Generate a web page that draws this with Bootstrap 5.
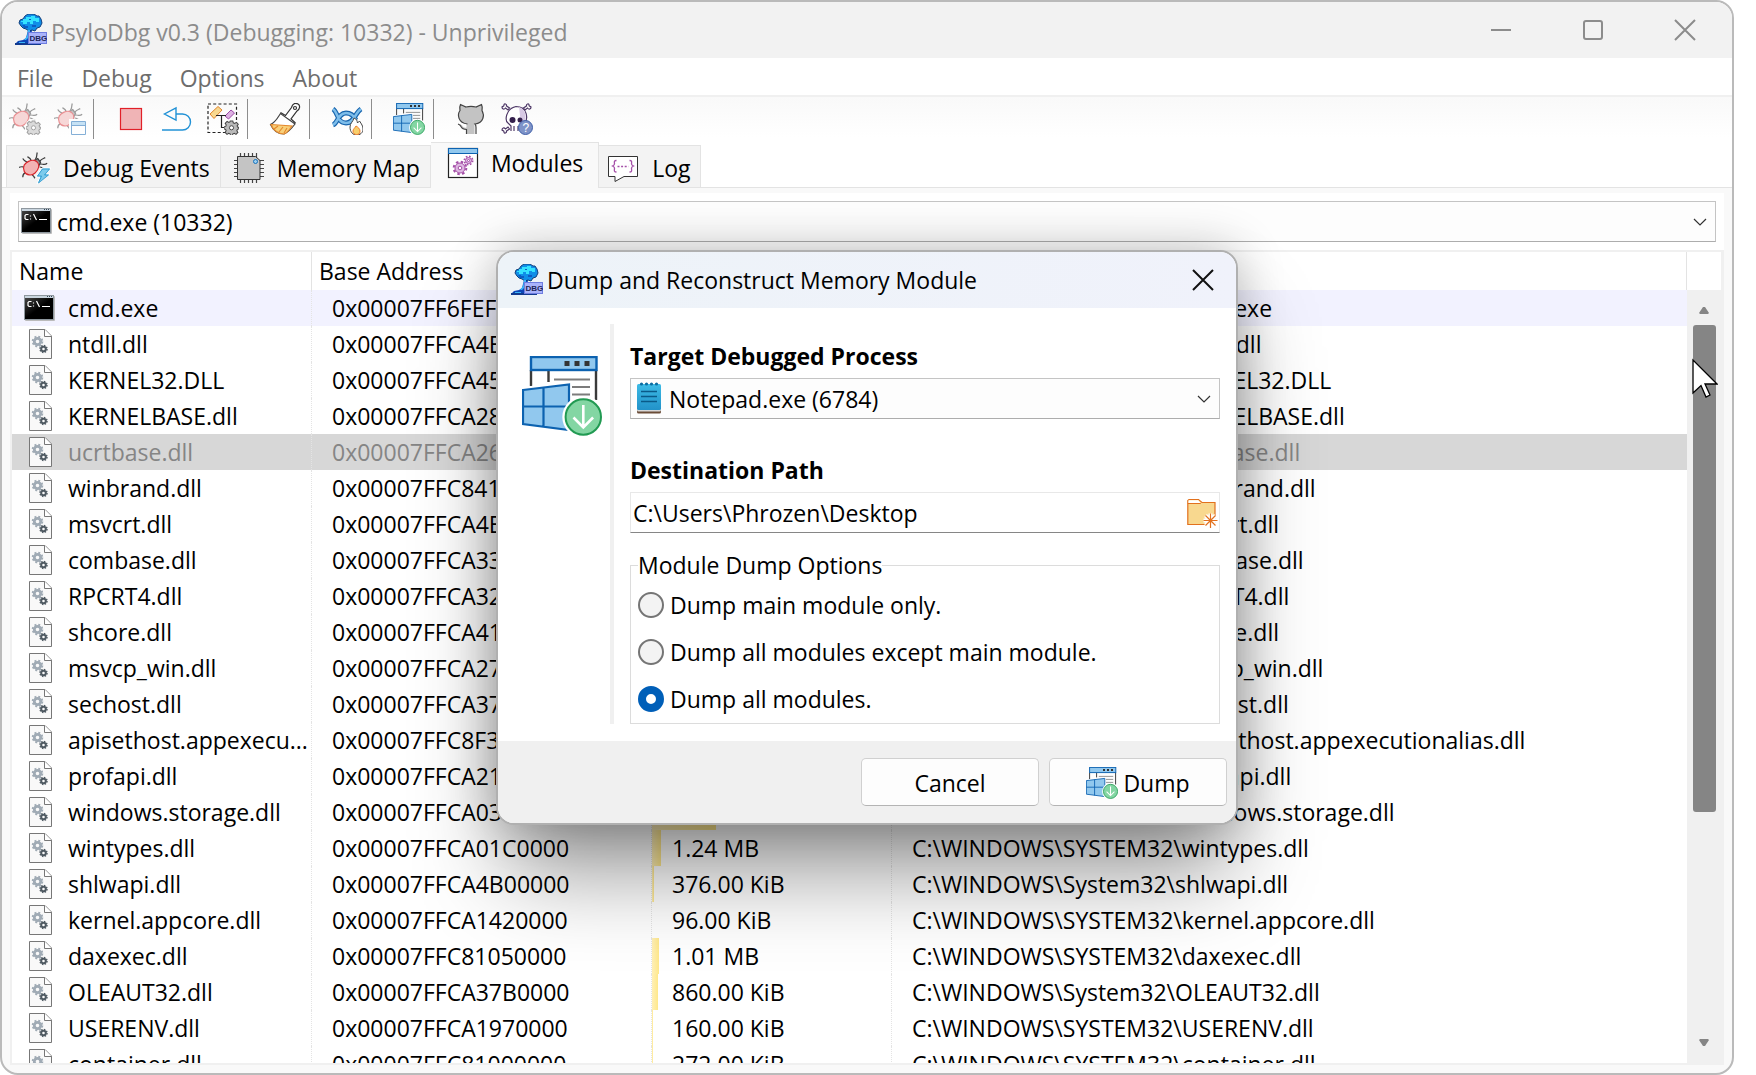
<!DOCTYPE html>
<html lang="en">
<head>
<meta charset="utf-8">
<meta name="viewport" content="width=device-width, initial-scale=1">
<title>PsyloDbg v0.3</title>
<link href="https://cdn.jsdelivr.net/npm/bootstrap@5.3.0/dist/css/bootstrap.min.css" rel="stylesheet">
<script src="https://cdn.jsdelivr.net/npm/bootstrap@5.3.0/dist/js/bootstrap.bundle.min.js"></script>
<style>
  body { font-family: "Open Sans", "Noto Sans", sans-serif; font-size: 23px; line-height: 36px; color: #000; background: #fff; }
  svg { flex: none; display: block; }
  .ico { width: 32px; height: 32px; }
  .app-window { margin-right: 22px; min-height: 0; border: 2px solid #bababa; border-radius: 18px; background: #f9f9f9; }
  .title-strip, .menu-strip, .tool-strip, .tab-strip { flex-shrink: 0; }
  .title-strip { height: 56px; padding: 0 1px 0 13px; background: #f2f2f2; color: #8c8c8c; }
  .caption-btn { width: 92px; height: 56px; }
  .bare { border: 0; background: none; padding: 0; display: flex; align-items: center; justify-content: center; }
  .menu-strip { height: 39px; padding: 3px 1px 0; border-bottom: 2px solid #f0f0f0; background: #fff; }
  .menu-strip a { color: #6d6d6d; text-decoration: none; padding: 0 14px; }
  .tool-strip { background: linear-gradient(#f9f9f9, #fff 90%); height: 45px; }
  .tool { width: 46px; height: 44px; }
  .tool:disabled { width: 45px; opacity: .5; }
  .tool-sep { width: 1px; height: 40px; margin: 2px 14px 0 1px; background: #8d8d8d; }
  .tab-strip { padding-left: 4px; background: #fff; height: 46px; border-bottom: 1px solid #e3e3e3; }
  .tab-btn { border: 1px solid #e3e3e3; border-bottom: 0; border-left-width: 0; background: #f3f3f3; height: 42px; padding: 2px 10px 0 12px; gap: 12px; }
  .tab-btn:first-child { border-left-width: 1px; }
  .tab-btn:last-child { padding: 2px 9px 0; }
  .tab-btn.active { height: 46px; background: #f9f9f9; margin-bottom: -1px; padding: 0 15px 6px 16px; }
  .page-pane { margin: 5px 8px 8px; background: #fff; flex: 1 1 0; min-height: 0; }
  .pick-box { position: relative; }
  .pick-box select { width: 100%; height: 41px; display: block; appearance: none; border: 1px solid #c4c4c4; border-bottom-color: #adadad; border-radius: 0; background: #fdfdfd; color: #000; padding: 0 36px 0 38px; }
  .pick-box .lead-ico { position: absolute; left: 3px; top: 4px; pointer-events: none; }
  .pick-box .chev { position: absolute; right: 9px; top: 17px; pointer-events: none; }
  .list-frame { border: 2px solid #f0f0f0; border-right-width: 3px; flex: 1 1 0; min-height: 0; }
  .mod-table { table-layout: fixed; width: 100%; border-collapse: separate; border-spacing: 0; }
  .mod-table th { height: 38px; line-height: 38px; padding: 0 0 0 7px; font-weight: 400; border-right: 1px solid #e3e3e3; }
  .mod-table td { height: 36px; padding: 0 0 0 20px; line-height: 36px; white-space: nowrap; overflow: hidden; border-right: 1px dotted #e4e4e4; }
  .mod-table td:first-child { padding-left: 12px; }
  .mod-table td:last-child { border-right: 0; }
  .mod-table td > .d-flex { gap: 12px; align-items: center; }
  .row-main { background: #f2f2ff; }
  .row-off { background: #d7d7d7; color: #858585; }
  .size-cell { background: linear-gradient(90deg, #fff0b8, #ffe88a) no-repeat left top / 0 100%; }
  .scroll-col { width: 34px; flex: none; background: #f0f0f0; }
  .scroll-head { height: 38px; background: #fff; flex: none; }
  .scroll-thumb { width: 23px; height: 60%; border-radius: 3px; background: #858585; margin-top: 2px; }
  .dlg { width: 742px; border: 2px solid #b0b0b0; border-radius: 18px; background: #fff; box-shadow: 0 56px 90px -10px rgba(0,0,0,.42), 0 0 48px rgba(0,0,0,.24); }
  .dlg-layer { position: absolute; inset: 0; }
  .dlg-title { height: 56px; padding: 0 22px 0 13px; background: linear-gradient(90deg, #edf3f8, #f0f2fb); }
  .dlg-body { padding: 16px 16px 17px 24px; }
  .dlg-art { margin-top: 32px; }
  .dlg-rule { width: 4px; background: #f0f0f0; margin: 0 16px 0 8px; }
  .dlg-form { padding-top: 15px; }
  .dlg-form .cap { display: block; font-weight: 700; line-height: 34px; margin-bottom: 5px; }
  .dlg-form .pick-box { margin-bottom: 34px; }
  .path-box { height: 41px; border: 1px solid #e8e8e8; border-bottom: 1px solid #868686; }
  .path-box input { border: 0; outline: 0; background: none; padding: 0 2px; color: #000; }
  .opt-group { border: 1px solid #dcdcdc; padding: 0 7px 1px; }
  .opt-group legend { float: none; width: auto; font-size: 23px; line-height: 32px; margin: 0; padding: 0; }
  .opt-line { height: 47px; gap: 6px; }
  .opt-line input { appearance: none; width: 26px; height: 26px; margin: 0; border: 2px solid #757575; border-radius: 50%; background: #f3f3f3; }
  .opt-line input:checked { border: 8px solid #005fb8; background: #fff; }
  .dlg-foot { padding: 17px 9px; background: #f0f0f0; gap: 10px; }
  .dlg-foot button { width: 178px; height: 48px; border: 1px solid #d0d0d0; border-bottom-color: #b4b4b4; border-radius: 5px; background: #fdfdfd; display: flex; align-items: center; justify-content: center; gap: 5px; color: #000; padding: 2px 0 0; }
  .pointer { position: absolute; right: 14px; top: 356px; }
</style>
</head>
<body class="vh-100 overflow-hidden d-flex flex-column">

<svg class="position-absolute" width="0" height="0" aria-hidden="true">
  <linearGradient id="cg" x1="0" y1="0" x2="1" y2="1"><stop offset="0" stop-color="#444"/><stop offset=".5" stop-color="#000"/></linearGradient>
  <symbol id="i-app" viewBox="0 0 32 32">
    <path d="M0 30l3-3 5-1 3-2 2-8h4l-1 8 3 3-2 4H0z" fill="#0d45b8"/><path d="M0 29h26v2H0z" fill="#123a8e"/>
    <path d="M4 9l1-3 3-1 2-3 3-2 6 0 3 2 2 0 2 3 1 4-2 4-3 1-2 3-3-1-3 1-3-2-3-1-2-2z" fill="#0f8ee8" stroke="#123f7c" stroke-width="1"/>
    <path d="M8 5h3V3h5V2h4v2h4v4h-3V7h-3v3h-3V8h-3v2H8V8H6V7h2z" fill="#35e2ff"/><path d="M7 11h3v1h3v2H9zM17 11h4v2h-4zM14 5h2v1h-2z" fill="#0c5cc4"/>
    <path d="M13 16h2v8h-2l-2 2H9l3-4zM4 28h6v1H4z" fill="#39b4f8"/>
    <rect x="13.500" y="18.500" width="18" height="11" fill="#a9b3fb" stroke="#6f7de0"/>
    <text x="14.500" y="27" font-family="Liberation Sans" font-weight="700" font-size="8" fill="#1d2457">DBG</text>
  </symbol>
  <symbol id="i-gear" viewBox="0 0 16 16">
    <path d="M6.600 1h2.800l.5 2 1.500.6L13.200 2.500l2 2L14 6.300l.5 1.200 1.500.4v1.500l-1.700.6-.6 1.500 1.100 1.800-2 2-1.800-1.100-1.500.6-.5 1.700H7l-.5-1.700-1.500-.6-1.800 1.100-2-2 1.100-1.800L1.700 10 0 9.500V7.300l1.800-.5.6-1.500L1.300 3.500l2-2 1.800 1.100 1.200-.5z" fill="#b9b9b9" stroke="#444" stroke-width="1.100"/>
    <circle cx="8" cy="8.300" r="2.200" fill="#fff" stroke="#444"/>
  </symbol>
  <symbol id="i-bug" viewBox="0 0 32 32">
    <g fill="none" stroke="#3d3d3d" stroke-width="1.300">
      <path d="M17.500 7.500c2-2 1-4 2-7M22 10c2-3 4-3 6-4M13 9c-1-3-3-3-4-4M22 13c3-1 5 2 8-1M9 11c-3-1-4-2-5-4M6 16c-2 0-4-1-6 .5M7 22c-3 1-3 3-3 5M14 25c2 0 2 2 3 3M22 16c3 0 3 2 6 2"/>
      <path d="M16 9l4-2 3 4-2 4z" fill="#8d8d8d"/>
    </g>
    <path d="M5.500 14c2-3 7-6 11-5 3 1 5 4 4.500 7-1 5-6 9-10 8.500-5-.5-7.500-6-5.500-10.500z" fill="#f2b3b3" stroke="#d8262c" stroke-width="1.300"/>
  </symbol>
  <symbol id="i-dump" viewBox="0 0 80 80">
    <path d="M9 14v16M74 14v30M26.500 14v12" stroke="#3a3a3a" stroke-width="2.400" fill="none"/>
    <path d="M32 23.500h36M50 31h18M50 38.500h18" stroke="#7c7c7c" stroke-width="2"/>
    <rect x="9" y="1" width="65.500" height="13" fill="#91c8ee" stroke="#0c62b0" stroke-width="2.400"/>
    <path d="M42.500 5h5v5h-5zM52.500 5h5v5h-5zM62.500 5h5v5h-5z" fill="#333"/>
    <path d="M1 34l46-5.500v46L1 68z" fill="#91c8ee" stroke="#fff" stroke-width="6"/>
    <path d="M1 34l46-5.500v45.500L1 68zM21.500 31.500v39.500M1 50.500h46" fill="#91c8ee" stroke="#0c62b0" stroke-width="2.200"/>
    <circle cx="61.300" cy="61" r="21" fill="#fff"/><circle cx="61.300" cy="61" r="17.700" fill="#83d6a3" stroke="#219a52" stroke-width="2"/>
    <path d="M61.300 49v22M51.500 61.500l9.800 10 9.800-10" fill="none" stroke="#fff" stroke-width="2.600"/>
  </symbol>
  <symbol id="i-cmd" viewBox="0 0 32 32">
    <rect x="1" y="4" width="30" height="25" rx="1" fill="#bbb"/><rect x="0" y="3" width="30" height="25" fill="#8e979e"/><rect x="1" y="4" width="28" height="2" fill="#c9d5df"/><rect x="1" y="6" width="28" height="21" fill="url(#cg)"/>
    <path d="M23 4.500h1M25 4.500h1M27 4.500h1" stroke="#345"/>
    <path d="M7.500 9.500H5L4 10.500v3l1 1h2.500M9.500 10.500v1M9.500 13.500v1M12.500 9l3 6M18 14.500h8" stroke="#fff" stroke-width="1.200" fill="none"/>
  </symbol>
  <symbol id="i-dll" viewBox="0 0 32 32">
    <path d="M5.500 1.500h15.500l6.500 6.500v22.500h-22z" fill="#f9f9f9" stroke="#777"/><path d="M20.500 1.500v7h7" fill="#fff" stroke="#777"/>
    <circle cx="13.500" cy="13.500" r="3.200" fill="none" stroke="#a0abb5" stroke-width="2.800"/><circle cx="13.500" cy="13.500" r="4.800" fill="none" stroke="#a0abb5" stroke-width="2" stroke-dasharray="1.900 1.900"/>
    <circle cx="19.500" cy="21" r="2.300" fill="none" stroke="#4f5a62" stroke-width="2"/><circle cx="19.500" cy="21" r="3.500" fill="none" stroke="#4f5a62" stroke-width="1.500" stroke-dasharray="1.400 1.350"/>
  </symbol>
</svg>

<main class="app-window flex-grow-1 d-flex flex-column overflow-hidden position-relative">
  <header class="title-strip d-flex align-items-center">
    <svg class="ico"><use href="#i-app"/></svg>
    <span class="ps-1 pt-1">PsyloDbg v0.3 (Debugging: 10332) - Unprivileged</span>
    <div class="ms-auto d-flex">
      <button class="bare caption-btn" aria-label="Minimize"><svg width="22" height="22" stroke="#8c8c8c" stroke-width="2"><path d="M1 11h20"/></svg></button>
      <button class="bare caption-btn" aria-label="Maximize"><svg width="22" height="22" fill="none" stroke="#8c8c8c" stroke-width="2"><rect x="2" y="2" width="18" height="18" rx="2"/></svg></button>
      <button class="bare caption-btn" aria-label="Close"><svg width="22" height="22" stroke="#8c8c8c" stroke-width="2"><path d="M1 1l20 20M21 1L1 21"/></svg></button>
    </div>
  </header>

  <nav class="menu-strip d-flex align-items-center"><a href="#">File</a><a href="#">Debug</a><a href="#">Options</a><a href="#">About</a></nav>

  <div class="tool-strip d-flex">
    <button class="bare tool" disabled aria-label="Attach"><svg class="ico" viewBox="0 0 32 32"><use href="#i-bug" width="30" height="30"/><circle cx="24" cy="24" r="8" fill="#fff"/><use href="#i-gear" x="17" y="17" width="15" height="15"/></svg></button>
    <button class="bare tool" disabled aria-label="Create process"><svg class="ico" viewBox="0 0 32 32"><use href="#i-bug" width="30" height="30"/><path d="M15 16h17v16H15z" fill="#fff"/><path d="M17.500 18.500h14v13h-14z" fill="#fff" stroke="#0c62b0"/><path d="M18 19h13v3H18z" fill="#91c8ee"/><path d="M17 22.500h15" stroke="#0c62b0"/></svg></button>
    <span class="tool-sep"></span>
    <button class="bare tool" aria-label="Stop"><svg class="ico" viewBox="0 0 32 32"><rect x="5.500" y="5.500" width="21" height="21" fill="#f0b4b6" stroke="#e12028" stroke-width="1.200"/></svg></button>
    <button class="bare tool" aria-label="Detach"><svg class="ico" viewBox="0 0 32 32" fill="none" stroke="#2292d6" stroke-width="1.400"><path d="M1 27h20.500a7.500 7.500 0 0 0 0-16H15M15 5v12L3.500 11z"/></svg></button>
    <button class="bare tool" aria-label="Process options"><svg class="ico" viewBox="0 0 32 32"><rect x="1" y="1" width="28.500" height="28.500" fill="none" stroke="#222" stroke-width="1.200" stroke-dasharray="3 2.200"/><path d="M3 11l8-7.500L15 7l-8 8.500z" fill="#f8d88f" stroke="#e0852c"/><path d="M18 13l6-6 3.500 3-6 6z" fill="#dcb0e2" stroke="#9a4aa5"/><path d="M9 12.500h10M14.500 12.500v12h5" fill="none" stroke="#222" stroke-width="1.200"/><circle cx="24.500" cy="24.500" r="7.500" fill="#fff"/><use href="#i-gear" x="17" y="17" width="15" height="15"/></svg></button>
    <span class="tool-sep"></span>
    <button class="bare tool" aria-label="Clear"><svg class="ico" viewBox="0 0 32 32" stroke-width="1.200"><path d="M1.500 21.500C7 19 9 14 11.500 10.500L26 21c-3 4-6 8-11 10C9 31 4 27 1.500 21.500z" fill="#fff" stroke="#444"/><path d="M2 21.500l21 1.500c-2 3-5 7-8 8C9 31 4 27 2 21.500z" fill="#f8d07a" stroke="#e58a2e"/><path d="M5 26l4-3M10 29l4-5M15 30l3-5" stroke="#e58a2e"/><path d="M11.500 9.500l5 3 6-8c1-4 4-5 6.500-3.500s2 5-1 7l-6 8 4.500 4" fill="#fff" stroke="#333"/><circle cx="26" cy="5" r="1.500" fill="#fff" stroke="#333"/></svg></button>
    <span class="tool-sep"></span>
    <button class="bare tool" aria-label="Hooks"><svg class="ico" viewBox="0 0 32 32" fill="none"><g stroke="#1764ad" stroke-width="4.800"><path d="M2 6c5 3 4 14 13 14 8 0 9-10 15-14M2 22c5-2 5-12 13-12 5 0 8 3 10 7"/></g><g stroke="#7dbdea" stroke-width="2.600"><path d="M2 6c5 3 4 14 13 14 8 0 9-10 15-14M2 22c5-2 5-12 13-12 5 0 8 3 10 7"/></g><path d="M19 24c0-4 3-5 4-9 3 1 3 3 3.500 5l2-2c2 3 3.500 5 3.500 8 0 4-3 6-6.500 6S19 29 19 24z" fill="#fff" stroke="#444"/><path d="M22 28c0-2 2-3 3-5 2 1 4 3 4 5 0 3-1.500 3.500-3.500 3.500S22 30.500 22 28z" fill="#f8cf6b" stroke="#ee7d2b"/></svg></button>
    <span class="tool-sep"></span>
    <button class="bare tool" aria-label="Dump module"><svg class="ico"><use href="#i-dump"/></svg></button>
    <span class="tool-sep"></span>
    <button class="bare tool" aria-label="Github"><svg class="ico" viewBox="0 0 32 32"><path d="M5.500 1.500l5.500 2.500c3-.7 7-.7 10 0l5.500-2.500c1 2 1 4 .5 6 2.500 4.500 2 12.500-7.500 13.500v10h-8v-4.500c-3.500 0-4.500-1-5.500-3-.5-1.500-1.500-2-2.500-2.500 3-.5 4 3 6 3.500 1 .5 2 0 2-.5v-3C3 20 2 11.500 5 7.500 4.500 5.500 4.500 3.500 5.500 1.500z" fill="#c3c3c3"/><path d="M11.500 31v-4.500c-3.500 0-4.500-1-5.500-3-.5-1.500-1.500-2-3-2.500M12.500 21C3 20 2 11.500 5 7.500c-.5-2-.5-4 .5-6l5.500 2.500c3-.7 7-.7 10 0l5.500-2.500c1 2 1 4 .5 6 2.500 4.500 2 12.500-7 13.500 1 1 1 2 1 3.500V31" fill="none" stroke="#444" stroke-width="1.200"/></svg></button>
    <button class="bare tool" aria-label="About"><svg class="ico" viewBox="0 0 32 32"><g fill="none" stroke="#4d3766" stroke-width="1.200"><path d="M1 4c1-1 2 0 2-2s3-1 2.500 1l3 2-1.500 2-2.500-2C3 7 1 6 1 4zM30 4c-1-1-2 0-2-2s-3-1-2.500 1l-3 2 1.500 2 2.500-2c1.500 2 3.500 1 3.500-1zM1 27c1 1 2 0 2 2s3 1 2.500-1l3-2-1.500-2-2.500 2C3 24 1 25 1 27z"/><path d="M7 20c-3-2-3-14 8-16.500 12 0 12 13 8.500 16.500l-3 3v4M7 20l3 3v5M13 23v5M17 23v5" fill="#fff"/></g><path d="M18 4c7 2 8 11 5 16l-3 1z" fill="#d8c9e4"/><circle cx="11.500" cy="17" r="3" fill="#35214d"/><circle cx="19" cy="17" r="2.500" fill="#35214d"/><circle cx="24.500" cy="24.500" r="7" fill="#7e93c8" stroke="#3f5fa8"/><text x="21.500" y="29" font-size="12" font-family="Liberation Sans" fill="#fff">?</text></svg></button>
  </div>

  <div class="tab-strip d-flex align-items-end" role="tablist">
    <button class="tab-btn d-flex align-items-center" role="tab"><svg class="ico" viewBox="0 0 32 32"><use href="#i-bug" width="30" height="30"/><path d="M23 16h9l-5 6h4L18 32l3-7h-4z" fill="#6cc6ea" stroke="#fff"/><path d="M23.500 17h7l-5 6h4l-10 8 3-7h-4z" fill="#7ccbec" stroke="#2694cc" stroke-width=".8"/></svg>Debug Events</button>
    <button class="tab-btn d-flex align-items-center" role="tab"><svg class="ico" viewBox="0 0 32 32"><path d="M7.500 1v30M11.500 1v30M15.500 1v30M19.500 1v30M23.500 1v30M1 8.500h30M1 12.500h30M1 16.500h30M1 20.500h30M1 24.500h30" stroke="#444" stroke-width="1.200"/><path d="M4.500 4.500h18l4.500 4v19H4.500z" fill="#c4c4c4" stroke="#333"/><circle cx="22.500" cy="9.500" r="2" fill="#9fd0f0" stroke="#1573bd"/></svg>Memory Map</button>
    <button class="tab-btn active d-flex align-items-center" role="tab" aria-selected="true"><svg class="ico" viewBox="0 0 32 32"><rect x="1.500" y="1.500" width="29" height="29" fill="#fff" stroke="#222" stroke-width="1.200"/><rect x="1.500" y="1.500" width="29" height="5" fill="#91c8ee" stroke="#0c62b0"/><g fill="none" stroke="#a550a8"><circle cx="13" cy="21" r="5" fill="#deb8e2"/><circle cx="13" cy="21" r="6.300" stroke-width="2" stroke-dasharray="2.500 2.450"/><circle cx="13" cy="21" r="1.800" fill="#fff"/><circle cx="21.500" cy="13.500" r="3" fill="#deb8e2"/><circle cx="21.500" cy="13.500" r="4.200" stroke-width="1.600" stroke-dasharray="1.700 1.600"/><circle cx="21.500" cy="13.500" r="1" fill="#fff"/></g></svg>Modules</button>
    <button class="tab-btn d-flex align-items-center" role="tab"><svg class="ico" viewBox="0 0 32 32" fill="none"><path d="M.5 4.500h29v20H16L7 29.500V24.500H.5z" fill="#fff" stroke="#333"/><path d="M8.500 8.500c-3 0-2 2-2 3.500 0 1-1 1.500-2 2 1 .5 2 1 2 2 0 2-1 4 2 4M21.500 8.500c3 0 2 2 2 3.500 0 1 1 1.500 2 2-1 .5-2 1-2 2 0 2 1 4-2 4" stroke="#a550a8" stroke-width="1.300"/><path d="M9.500 14.500h11" stroke="#a550a8" stroke-width="1.300" stroke-dasharray="2 1.600"/></svg>Log</button>
  </div>

  <section class="page-pane d-flex flex-column">
    <div class="pick-box mx-2 my-2">
      <svg class="ico lead-ico"><use href="#i-cmd"/></svg>
      <select aria-label="Process"><option>cmd.exe (10332)</option></select>
      <svg class="chev" width="14" height="9" fill="none" stroke="#333" stroke-width="1.200"><path d="M1 1l6 6 6-6"/></svg>
    </div>
    <div class="list-frame d-flex overflow-hidden">
      <div class="flex-grow-1 overflow-hidden">
        <table class="mod-table">
          <colgroup><col style="width:300px"><col style="width:340px"><col style="width:240px"><col></colgroup>
          <thead><tr><th>Name</th><th>Base Address</th><th>Size</th><th>Image Path</th></tr></thead>
          <tbody>
            <tr class="row-main"><td><div class="d-flex"><svg class="ico"><use href="#i-cmd"/></svg>cmd.exe</div></td><td>0x00007FF6FEF50000</td><td class="size-cell"></td><td>C:\WINDOWS\SYSTEM32\cmd.exe</td></tr>
            <tr><td><div class="d-flex"><svg class="ico"><use href="#i-dll"/></svg>ntdll.dll</div></td><td>0x00007FFCA4E</td><td class="size-cell"></td><td>C:\WINDOWS\SYSTEM32\ntdll.dll</td></tr>
            <tr><td><div class="d-flex"><svg class="ico"><use href="#i-dll"/></svg>KERNEL32.DLL</div></td><td>0x00007FFCA45</td><td class="size-cell"></td><td>C:\WINDOWS\System32\KERNEL32.DLL</td></tr>
            <tr><td><div class="d-flex"><svg class="ico"><use href="#i-dll"/></svg>KERNELBASE.dll</div></td><td>0x00007FFCA28</td><td class="size-cell"></td><td>C:\WINDOWS\System32\KERNELBASE.dll</td></tr>
            <tr class="row-off"><td><div class="d-flex"><svg class="ico"><use href="#i-dll"/></svg>ucrtbase.dll</div></td><td>0x00007FFCA26</td><td></td><td>C:\WINDOWS\System32\ucrtbase.dll</td></tr>
            <tr><td><div class="d-flex"><svg class="ico"><use href="#i-dll"/></svg>winbrand.dll</div></td><td>0x00007FFC841</td><td class="size-cell"></td><td>C:\WINDOWS\SYSTEM32\winbrand.dll</td></tr>
            <tr><td><div class="d-flex"><svg class="ico"><use href="#i-dll"/></svg>msvcrt.dll</div></td><td>0x00007FFCA4B</td><td class="size-cell"></td><td>C:\WINDOWS\System32\msvcrt.dll</td></tr>
            <tr><td><div class="d-flex"><svg class="ico"><use href="#i-dll"/></svg>combase.dll</div></td><td>0x00007FFCA33</td><td class="size-cell"></td><td>C:\WINDOWS\System32\combase.dll</td></tr>
            <tr><td><div class="d-flex"><svg class="ico"><use href="#i-dll"/></svg>RPCRT4.dll</div></td><td>0x00007FFCA32</td><td class="size-cell"></td><td>C:\WINDOWS\System32\RPCRT4.dll</td></tr>
            <tr><td><div class="d-flex"><svg class="ico"><use href="#i-dll"/></svg>shcore.dll</div></td><td>0x00007FFCA41</td><td class="size-cell"></td><td>C:\WINDOWS\System32\shcore.dll</td></tr>
            <tr><td><div class="d-flex"><svg class="ico"><use href="#i-dll"/></svg>msvcp_win.dll</div></td><td>0x00007FFCA27</td><td class="size-cell"></td><td>C:\WINDOWS\System32\msvcp_win.dll</td></tr>
            <tr><td><div class="d-flex"><svg class="ico"><use href="#i-dll"/></svg>sechost.dll</div></td><td>0x00007FFCA37</td><td class="size-cell"></td><td>C:\WINDOWS\System32\sechost.dll</td></tr>
            <tr><td><div class="d-flex"><svg class="ico"><use href="#i-dll"/></svg>apisethost.appexecu...</div></td><td>0x00007FFC8F3</td><td class="size-cell"></td><td>C:\WINDOWS\SYSTEM32\apisethost.appexecutionalias.dll</td></tr>
            <tr><td><div class="d-flex"><svg class="ico"><use href="#i-dll"/></svg>profapi.dll</div></td><td>0x00007FFCA21</td><td class="size-cell"></td><td>C:\WINDOWS\SYSTEM32\profapi.dll</td></tr>
            <tr><td><div class="d-flex"><svg class="ico"><use href="#i-dll"/></svg>windows.storage.dll</div></td><td>0x00007FFCA03</td><td class="size-cell" style="background-size:64px 100%"></td><td>C:\WINDOWS\SYSTEM32\windows.storage.dll</td></tr>
            <tr><td><div class="d-flex"><svg class="ico"><use href="#i-dll"/></svg>wintypes.dll</div></td><td>0x00007FFCA01C0000</td><td class="size-cell" style="background-size:9px 100%">1.24 MB</td><td>C:\WINDOWS\SYSTEM32\wintypes.dll</td></tr>
            <tr><td><div class="d-flex"><svg class="ico"><use href="#i-dll"/></svg>shlwapi.dll</div></td><td>0x00007FFCA4B00000</td><td class="size-cell" style="background-size:2px 100%">376.00 KiB</td><td>C:\WINDOWS\System32\shlwapi.dll</td></tr>
            <tr><td><div class="d-flex"><svg class="ico"><use href="#i-dll"/></svg>kernel.appcore.dll</div></td><td>0x00007FFCA1420000</td><td class="size-cell">96.00 KiB</td><td>C:\WINDOWS\SYSTEM32\kernel.appcore.dll</td></tr>
            <tr><td><div class="d-flex"><svg class="ico"><use href="#i-dll"/></svg>daxexec.dll</div></td><td>0x00007FFC81050000</td><td class="size-cell" style="background-size:7px 100%">1.01 MB</td><td>C:\WINDOWS\SYSTEM32\daxexec.dll</td></tr>
            <tr><td><div class="d-flex"><svg class="ico"><use href="#i-dll"/></svg>OLEAUT32.dll</div></td><td>0x00007FFCA37B0000</td><td class="size-cell" style="background-size:6px 100%">860.00 KiB</td><td>C:\WINDOWS\System32\OLEAUT32.dll</td></tr>
            <tr><td><div class="d-flex"><svg class="ico"><use href="#i-dll"/></svg>USERENV.dll</div></td><td>0x00007FFCA1970000</td><td class="size-cell" style="background-size:1px 100%">160.00 KiB</td><td>C:\WINDOWS\SYSTEM32\USERENV.dll</td></tr>
            <tr><td><div class="d-flex"><svg class="ico"><use href="#i-dll"/></svg>container.dll</div></td><td>0x00007FFC81000000</td><td class="size-cell" style="background-size:1px 100%">272.00 KiB</td><td>C:\WINDOWS\SYSTEM32\container.dll</td></tr>
          </tbody>
        </table>
      </div>
      <div class="scroll-col d-flex flex-column align-items-center">
        <div class="scroll-head w-100"></div>
        <svg width="12" height="9" class="mt-3 mb-2"><path d="M5 1h2l4 6-1 1H2L1 7z" fill="#858585"/></svg>
        <div class="scroll-thumb"></div>
        <svg width="12" height="9" class="mt-auto mb-3"><path d="M5 8h2l4-6-1-1H2L1 2z" fill="#858585"/></svg>
      </div>
    </div>
  </section>

  <div class="dlg-layer d-flex align-items-center justify-content-center">
    <form class="dlg overflow-hidden" role="dialog" aria-labelledby="dlgTitle">
      <div class="dlg-title d-flex align-items-center">
        <svg class="ico"><use href="#i-app"/></svg>
        <span id="dlgTitle" class="ps-1">Dump and Reconstruct Memory Module</span>
        <button type="button" class="bare ms-auto" aria-label="Close"><svg width="22" height="22" stroke="#111" stroke-width="2"><path d="M1 1l20 20M21 1L1 21"/></svg></button>
      </div>
      <div class="dlg-body d-flex">
        <svg class="dlg-art" width="80" height="80"><use href="#i-dump"/></svg>
        <div class="dlg-rule"></div>
        <div class="dlg-form flex-grow-1">
          <label class="cap" for="target">Target Debugged Process</label>
          <div class="pick-box">
            <svg class="ico lead-ico" viewBox="0 0 32 32"><linearGradient id="ng" x2="0" y2="1"><stop offset="0" stop-color="#3dbbe6"/><stop offset="1" stop-color="#2292c9"/></linearGradient><rect x="4" y="25" width="24" height="6.500" rx="1.500" fill="#6b4d38"/><rect x="4" y="24" width="24" height="5.500" rx="1.500" fill="#d8d8d8"/><rect x="4" y="2" width="24" height="26" rx="1.500" fill="url(#ng)"/><path d="M8 9.500h16M8 14.500h16M8 19.500h16" stroke="#0a5a88" stroke-width="1.600"/><g fill="#0c6ca0"><circle cx="8.500" cy="2" r="1.600"/><circle cx="13.500" cy="2" r="1.600"/><circle cx="18.500" cy="2" r="1.600"/><circle cx="23.500" cy="2" r="1.600"/></g></svg>
            <select id="target"><option>Notepad.exe (6784)</option></select>
            <svg class="chev" width="14" height="9" fill="none" stroke="#333" stroke-width="1.200"><path d="M1 1l6 6 6-6"/></svg>
          </div>
          <label class="cap" for="dest">Destination Path</label>
          <div class="path-box d-flex align-items-center">
            <input id="dest" class="flex-grow-1" type="text" value="C:\Users\Phrozen\Desktop">
            <button type="button" class="bare" aria-label="Browse"><svg class="ico" viewBox="0 0 32 32"><path d="M.8 5.800V3.500L2 2.500h9.500l3.500 3h13v22H.8z" fill="#f8d88f" stroke="#e2711d" stroke-width="1.200"/><path d="M1.500 6.500V3.200h9.800l2.700 3.300z" fill="#fff"/><path d="M.8 6.500h13" stroke="#e2711d"/><g stroke="#fff" stroke-width="4"><path d="M23.500 16.500v14M16.500 23.500h14M18.500 18.500l10 10M28.500 18.500l-10 10"/></g><g stroke="#e2711d" stroke-width="1.200"><path d="M23.500 16.500v14.500M16.500 23.500h14M18.500 18.500l10 10M28.500 18.500l-10 10"/></g></svg></button>
          </div>
          <fieldset class="opt-group mt-3">
            <legend>Module Dump Options</legend>
            <label class="opt-line d-flex align-items-center"><input type="radio" name="mode">Dump main module only.</label>
            <label class="opt-line d-flex align-items-center"><input type="radio" name="mode">Dump all modules except main module.</label>
            <label class="opt-line d-flex align-items-center"><input type="radio" name="mode" checked>Dump all modules.</label>
          </fieldset>
        </div>
      </div>
      <div class="dlg-foot d-flex justify-content-end">
        <button type="button">Cancel</button>
        <button type="button"><svg class="ico"><use href="#i-dump"/></svg>Dump</button>
      </div>
    </form>
  </div>

  <svg class="pointer" width="26" height="40"><path d="M1 2v33l8-7.500 5 11.500 4-2-5-11h12z" fill="#fff" stroke="#000" stroke-width="1.300"/></svg>
</main>
</body>
</html>
